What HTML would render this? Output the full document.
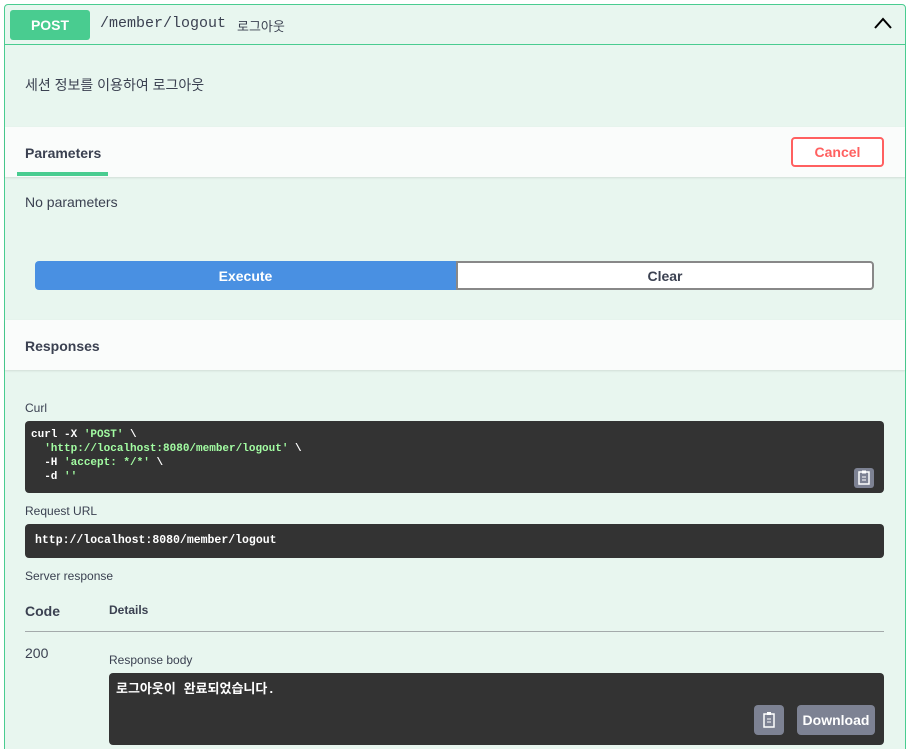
<!DOCTYPE html>
<html><head><meta charset="utf-8"><style>
*{box-sizing:border-box;margin:0;padding:0}
html,body{width:910px;height:749px;overflow:hidden}
body{background:#fff;font-family:"Liberation Sans","Noto Sans CJK KR",sans-serif;color:#3b4151;position:relative}
.a{position:absolute}
.box{left:4px;top:4px;width:902px;height:760px;border:1px solid #49cc90;border-radius:4px;background:#e8f6ef}
.mono{font-family:"Liberation Mono","Noto Sans CJK KR",monospace}
.dark{background:#333;border-radius:4px}
</style></head><body>
<div class="a box"></div>
<div class="a" style="left:5px;top:44px;width:900px;height:1px;background:#49cc90"></div>
<div class="a" style="left:10px;top:10px;width:80px;height:30px;background:#49cc90;border-radius:3px;color:#fff;font-weight:bold;font-size:14px;text-align:center;line-height:30px">POST</div>
<div class="a mono" style="left:100px;top:15px;font-size:15px;color:#3b4151">/member/logout</div>
<div class="a" style="left:237px;top:16px;font-size:13px;color:#3b4151">로그아웃</div>
<svg class="a" style="left:873px;top:16px" width="20" height="14"><path d="M2 12 L10 3 L18 12" fill="none" stroke="#000" stroke-width="2"/></svg>
<div class="a" style="left:25px;top:75px;font-size:14px">세션 정보를 이용하여 로그아웃</div>
<div class="a" style="left:5px;top:127px;width:900px;height:50px;background:#fafcfb;box-shadow:0 1px 2px rgba(0,0,0,.1)"></div>
<div class="a" style="left:25px;top:145px;font-size:14px;font-weight:bold">Parameters</div>
<div class="a" style="left:17px;top:172px;width:91px;height:4px;background:#49cc90"></div>
<div class="a" style="left:791px;top:137px;width:93px;height:30px;border:2px solid #ff6060;border-radius:4px;color:#ff6060;font-weight:bold;font-size:14px;text-align:center;line-height:27px;background:#fff">Cancel</div>
<div class="a" style="left:25px;top:194px;font-size:14px">No parameters</div>
<div class="a" style="left:35px;top:261px;width:421px;height:29px;background:#4990e2;border-radius:4px 0 0 4px;color:#fff;font-weight:bold;font-size:14px;text-align:center;line-height:30px">Execute</div>
<div class="a" style="left:456px;top:261px;width:418px;height:29px;border:2px solid #888;border-radius:0 4px 4px 0;font-weight:bold;font-size:14px;text-align:center;line-height:27px;background:#fff">Clear</div>
<div class="a" style="left:5px;top:320px;width:900px;height:50px;background:#fafcfb;box-shadow:0 1px 2px rgba(0,0,0,.1)"></div>
<div class="a" style="left:25px;top:338px;font-size:14px;font-weight:bold">Responses</div>
<div class="a" style="left:25px;top:401px;font-size:12px">Curl</div>
<div class="a dark" style="left:25px;top:421px;width:859px;height:72px"></div>
<div class="a mono" style="left:31px;top:428px;font-size:11px;line-height:14px;color:#fff;font-weight:bold;white-space:pre">curl -X <span style="color:#a2fca2">'POST'</span> \
  <span style="color:#a2fca2">'http://localhost:8080/member/logout'</span> \
  -H <span style="color:#a2fca2">'accept: */*'</span> \
  -d <span style="color:#a2fca2">''</span></div>
<div class="a" style="left:854px;top:468px;width:20px;height:20px;background:#7d8293;border-radius:3px"></div>
<svg class="a" style="left:857px;top:470px" width="14" height="16"><rect x="2" y="2" width="10" height="12" fill="none" stroke="#fff" stroke-width="1.5"/><rect x="5" y="0.5" width="4" height="3" fill="#fff"/><path d="M5 7h4M5 10h4" stroke="#fff"/></svg>
<div class="a" style="left:25px;top:504px;font-size:12px">Request URL</div>
<div class="a dark" style="left:25px;top:524px;width:859px;height:34px"></div>
<div class="a mono" style="left:35px;top:534px;font-size:11.5px;color:#fff;font-weight:bold">http://localhost:8080/member/logout</div>
<div class="a" style="left:25px;top:569px;font-size:12px">Server response</div>
<div class="a" style="left:25px;top:603px;font-size:14px;font-weight:bold">Code</div>
<div class="a" style="left:109px;top:603px;font-size:12px;font-weight:bold">Details</div>
<div class="a" style="left:25px;top:631px;width:859px;height:1px;background:#a4aaab"></div>
<div class="a" style="left:25px;top:645px;font-size:14px">200</div>
<div class="a" style="left:109px;top:653px;font-size:12px">Response body</div>
<div class="a dark" style="left:109px;top:673px;width:775px;height:72px"></div>
<div class="a mono" style="left:116px;top:678px;font-size:13px;color:#fff;font-weight:bold">로그아웃이 완료되었습니다.</div>
<div class="a" style="left:754px;top:705px;width:30px;height:30px;background:#7d8293;border-radius:4px"></div>
<svg class="a" style="left:762px;top:711px" width="14" height="18"><rect x="2" y="3" width="10" height="13" fill="none" stroke="#fff" stroke-width="1.5"/><rect x="5" y="1" width="4" height="3" fill="#fff"/><path d="M5 8h4M5 11h4" stroke="#fff"/></svg>
<div class="a" style="left:797px;top:705px;width:78px;height:30px;background:#7d8293;border-radius:4px;color:#fff;font-weight:bold;font-size:14px;text-align:center;line-height:30px">Download</div>
</body></html>
